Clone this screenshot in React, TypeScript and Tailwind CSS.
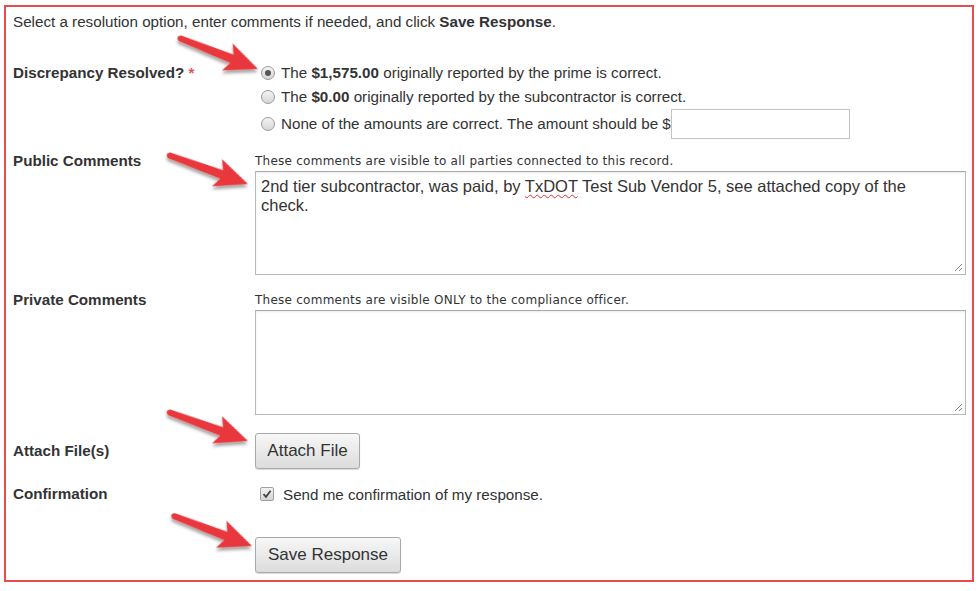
import React from "react";

function Radio({ checked }: { checked?: boolean }) {
  return (
    <span className="ml-[6px] flex h-[14px] w-[14px] shrink-0 items-center justify-center rounded-full border border-[#9a9a9a] bg-gradient-to-b from-[#f4f4f4] to-[#d6d6d6]">
      {checked && <span className="h-[6px] w-[6px] rounded-full bg-[#555]" />}
    </span>
  );
}

function Grip() {
  return (
    <svg className="absolute bottom-[2px] right-[2px]" width="9" height="9" viewBox="0 0 9 9">
      <path d="M8 1 L1 8 M8 5 L5 8" stroke="#8a8a8a" strokeWidth="1" />
    </svg>
  );
}

function Box({ h, children }: { h: string; children?: React.ReactNode }) {
  return (
    <div className={`relative w-[711px] ${h} border border-[#b9b9b9] border-t-[#a9a9a9] bg-white px-[5px] pt-[5px] text-[16.5px] leading-[19px] text-[#333] shadow-[inset_0_1px_2px_rgba(0,0,0,0.08)]`}>
      {children}
      <Grip />
    </div>
  );
}

function Arrows() {
  // tip position + rotation, taken from the reference
  const arrows = [
    { x: 258, y: 69, a: 21.5 },
    { x: 248, y: 184, a: 20 },
    { x: 248, y: 441, a: 20 },
    { x: 252, y: 546, a: 21 },
  ];
  return (
    <svg className="pointer-events-none absolute left-0 top-0" width="980" height="591">
      <defs>
        <filter id="sh" x="-50%" y="-50%" width="200%" height="200%">
          <feDropShadow dx="1" dy="3" stdDeviation="1.6" floodColor="#000" floodOpacity="0.35" />
        </filter>
      </defs>
      {arrows.map((ar, i) => (
        <g key={i} transform={`translate(${ar.x} ${ar.y}) rotate(${ar.a})`} filter="url(#sh)">
          <path
            d="M0 0 L-33 -14.5 L-28 -4.5 L-84 -3 Q-89 0 -84 3 L-28 4.5 L-33 14.5 Z"
            fill="#e8393c"
          />
        </g>
      ))}
    </svg>
  );
}

export default function App() {
  return (
    <div className="relative h-[591px] w-[980px] bg-white pl-[4px] pt-[5px] font-['Liberation_Sans',Arial,sans-serif] text-[15.2px] text-[#333]">
      <div className="h-[577px] w-[970px] border-2 border-[#e94a4c] pl-[7px] pt-[6px]">
        <p className="leading-[18px]">
          Select a resolution option, enter comments if needed, and click <b>Save Response</b>.
        </p>

        <div className="mt-[30px] flex">
          <div className="w-[242px] shrink-0 font-bold leading-[24px]">
            Discrepancy Resolved? <span className="text-[#e0555a]">*</span>
          </div>
          <div className="flex flex-col">
            <label className="flex h-[24px] items-center gap-[6px]">
              <Radio checked />
              <span>
                The <b>$1,575.00</b> originally reported by the prime is correct.
              </span>
            </label>
            <label className="flex h-[24px] items-center gap-[6px]">
              <Radio />
              <span>
                The <b>$0.00</b> originally reported by the subcontractor is correct.
              </span>
            </label>
            <label className="flex h-[30px] items-center gap-[6px]">
              <Radio />
              <span>None of the amounts are correct. The amount should be $</span>
              <input className="-ml-[6px] h-[30px] w-[179px] border border-[#c4c4c4] bg-white outline-none" />
            </label>
          </div>
        </div>

        <div className="mt-[13px] flex">
          <div className="w-[242px] shrink-0 font-bold leading-[18px]">Public Comments</div>
          <div>
            <div className="pt-[3px] font-['DejaVu_Sans',Verdana,sans-serif] text-[12px] leading-[13px] tracking-[0.25px] text-[#333]">
              These comments are visible to all parties connected to this record.
            </div>
            <div className="mt-[3px]">
              <Box h="h-[104px]">
                2nd tier subcontractor, was paid, by{" "}
                <span className="underline decoration-[#e0303a] decoration-wavy decoration-1 underline-offset-2">TxDOT</span>{" "}
                Test Sub Vendor 5, see attached copy of the
                <br />
                check.
              </Box>
            </div>
          </div>
        </div>

        <div className="mt-[16px] flex">
          <div className="w-[242px] shrink-0 font-bold leading-[18px]">Private Comments</div>
          <div>
            <div className="pt-[3px] font-['DejaVu_Sans',Verdana,sans-serif] text-[12px] leading-[13px] tracking-[0.25px] text-[#333]">
              These comments are visible ONLY to the compliance officer.
            </div>
            <div className="mt-[3px]">
              <Box h="h-[105px]" />
            </div>
          </div>
        </div>

        <div className="mt-[18px] flex h-[36px] items-center">
          <div className="w-[242px] shrink-0 font-bold">Attach File(s)</div>
          <button className="h-[36px] w-[105px] rounded-[3px] border border-[#a9a9a9] bg-gradient-to-b from-[#f7f7f7] to-[#dcdcdc] text-[17px] text-[#333] shadow-[0_1px_1px_rgba(0,0,0,0.15)]">
            Attach File
          </button>
        </div>

        <div className="mt-[15px] flex h-[20px] items-center">
          <div className="w-[242px] shrink-0 font-bold">Confirmation</div>
          <label className="flex items-center gap-[9px]">
            <span className="ml-[5px] flex h-[14px] w-[14px] items-center justify-center rounded-[2px] border border-[#a0a0a0] bg-gradient-to-b from-[#f2f2f2] to-[#d4d4d4]">
              <svg width="10" height="10" viewBox="0 0 10 10">
                <path d="M1.5 5.2 L4 7.8 L8.6 1.8" stroke="#444" strokeWidth="1.8" fill="none" />
              </svg>
            </span>
            <span className="pt-[3px]">Send me confirmation of my response.</span>
          </label>
        </div>

        <div className="mt-[33px] flex">
          <div className="w-[242px] shrink-0" />
          <button className="h-[36px] w-[146px] rounded-[3px] border border-[#a9a9a9] bg-gradient-to-b from-[#f7f7f7] to-[#dcdcdc] text-[17px] text-[#333] shadow-[0_1px_1px_rgba(0,0,0,0.15)]">
            Save Response
          </button>
        </div>
      </div>
      <Arrows />
    </div>
  );
}
